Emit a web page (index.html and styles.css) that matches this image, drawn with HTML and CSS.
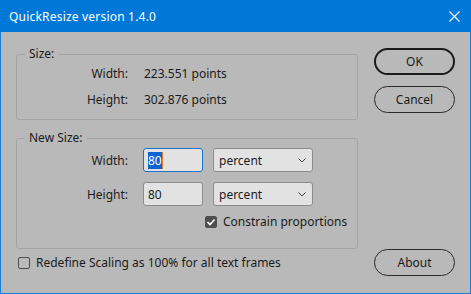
FILE: index.html
```html
<!DOCTYPE html>
<html lang="en">
<head>
    <meta charset="UTF-8">
    <title>QuickResize version 1.4.0</title>
    <link rel="stylesheet" href="styles.css">
</head>
<body>
    <div class="window">
        <!-- Title bar -->
        <div class="titlebar">
            <span class="title">QuickResize version 1.4.0</span>
            <svg class="close" width="11" height="11" viewBox="0 0 11 11">
                <path d="M0.5 0.5 L10.5 10.5 M10.5 0.5 L0.5 10.5" stroke="#fff" stroke-width="1.1" fill="none"/>
            </svg>
        </div>

        <div class="content">
            <div class="main-row">
                <div class="groups">
                    <fieldset class="group size-group">
                        <legend>Size:</legend>
                        <div class="info-grid">
                            <span class="lbl">Width:</span>
                            <span class="val">223.551 points</span>
                            <span class="lbl">Height:</span>
                            <span class="val">302.876 points</span>
                        </div>
                    </fieldset>

                    <fieldset class="group new-size-group">
                        <legend>New Size:</legend>
                        <div class="form-grid">
                            <label class="lbl">Width:</label>
                            <div class="field focused"><span class="selected">80</span></div>
                            <div class="dropdown">
                                <span>percent</span>
                                <svg width="8" height="5" viewBox="0 0 8 5"><path d="M0.5 0.5 L4 4 L7.5 0.5" stroke="#444" fill="none"/></svg>
                            </div>

                            <label class="lbl">Height:</label>
                            <div class="field"><span>80</span></div>
                            <div class="dropdown">
                                <span>percent</span>
                                <svg width="8" height="5" viewBox="0 0 8 5"><path d="M0.5 0.5 L4 4 L7.5 0.5" stroke="#444" fill="none"/></svg>
                            </div>
                        </div>
                        <div class="check-row constrain">
                            <span class="checkbox checked">
                                <svg width="12" height="12" viewBox="0 0 12 12"><path d="M2.5 6 L5 8.5 L9.5 3.5" stroke="#fff" stroke-width="1.6" fill="none"/></svg>
                            </span>
                            <span>Constrain proportions</span>
                        </div>
                    </fieldset>
                </div>

                <div class="buttons">
                    <button class="btn btn-default">OK</button>
                    <button class="btn">Cancel</button>
                </div>
            </div>

            <div class="bottom-row">
                <div class="check-row">
                    <span class="checkbox"></span>
                    <span>Redefine Scaling as 100% for all text frames</span>
                </div>
                <button class="btn">About</button>
            </div>
        </div>
    </div>
</body>
</html>
```

FILE: styles.css
```css
/* General */
body {
    margin: 0;
    padding: 0;
    font-family: 'Noto Sans', 'Open Sans', sans-serif;
    font-size: 12px;
    color: #1b1b1b;
    background-color: #b9b9b9;
}

.window {
    width: 471px;
    height: 294px;
    box-sizing: border-box;
    border: 1px solid #1a7fd4;
    border-top: none;
    background-color: #b9b9b9;
}

/* Title bar */
.titlebar {
    height: 32px;
    background-color: #0078d7;
    color: white;
    display: flex;
    align-items: center;
    justify-content: space-between;
    padding: 0 11px 0 9px;
    margin: 0 -1px;
}

.title {
    font-size: 12px;
    letter-spacing: 0.2px;
}

/* Content */
.content {
    padding: 15px 15px 0 15px;
}

.main-row {
    display: flex;
    gap: 16px;
}

.groups {
    width: 344px;
    display: flex;
    flex-direction: column;
    gap: 11px;
}

.group {
    margin: 0;
    padding: 0 0 0 8px;
    border: 1px solid #a4a4a4;
    border-radius: 3px;
}

.group legend {
    padding: 0 4px;
    line-height: 14px;
}

.size-group {
    height: 71px;
}

.info-grid {
    display: grid;
    grid-template-columns: 103px auto;
    column-gap: 16px;
    row-gap: 10px;
    padding-top: 5px;
    line-height: 16px;
}

.lbl {
    text-align: right;
}

.new-size-group {
    height: 116px;
}

.form-grid {
    display: grid;
    grid-template-columns: 103px 60px 100px;
    column-gap: 15px;
    row-gap: 10px;
    align-items: center;
    padding-top: 3px;
}

.field {
    height: 24px;
    box-sizing: border-box;
    border: 1px solid #8c8c8c;
    border-radius: 3px;
    background-color: #e2e2e2;
    padding: 0 4px;
    display: flex;
    align-items: center;
}

.field.focused {
    border-color: #1a73d0;
}

.selected {
    background-color: #0a64d2;
    color: white;
    border-right: 1px solid #e07b2a;
}

.dropdown {
    width: 100px;
    height: 24px;
    margin-left: -5px;
    box-sizing: border-box;
    border: 1px solid #8c8c8c;
    border-radius: 3px;
    background-color: #e2e2e2;
    padding: 0 6px 0 5px;
    display: flex;
    align-items: center;
    justify-content: space-between;
}

/* Checkboxes */
.check-row {
    display: flex;
    align-items: center;
    gap: 6px;
}

.constrain {
    margin-top: 7px;
    margin-left: 180px;
}

.checkbox {
    width: 12px;
    height: 12px;
    box-sizing: border-box;
    border: 1px solid #4f4f4f;
    border-radius: 2px;
    display: inline-block;
}

.checkbox.checked {
    background-color: #4f4f4f;
}

.checkbox svg {
    display: block;
    margin: -1px;
}

/* Buttons */
.buttons {
    display: flex;
    flex-direction: column;
    gap: 11px;
    margin-top: 1px;
}

.btn {
    width: 81px;
    height: 27px;
    box-sizing: border-box;
    border: 1px solid #2a2a2a;
    border-radius: 14px;
    background: transparent;
    font-family: inherit;
    font-size: 12px;
    color: #1b1b1b;
    padding: 0;
}

.btn-default {
    border: 2px solid #1a1a1a;
}

.bottom-row {
    display: flex;
    justify-content: space-between;
    align-items: center;
    margin-top: 0;
    padding-left: 2px;
}
```
